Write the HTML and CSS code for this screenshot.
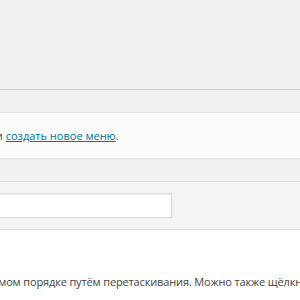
FILE: index.html
```html
<!DOCTYPE html>
<html lang="ru">
<head>
    <meta charset="UTF-8">
    <title>Меню</title>
    <link rel="stylesheet" href="styles.css">
</head>
<body>
    <div class="wrap">
        <div class="tabs"></div>

        <div class="manage-menus">
            <span class="manage-text">Выберите меню для изменения или <a href="#">создать новое меню</a>.</span>
        </div>

        <div class="menu-edit">
            <div class="menu-header">
                <input class="menu-name" type="text" value="">
            </div>
            <div class="menu-body">
                <p class="drag-instructions">Расположите пункты в необходимом порядке путём перетаскивания. Можно также щёлкнуть на стрелку справа от пункта, чтобы открыть дополнительные настройки.</p>
            </div>
        </div>
    </div>
</body>
</html>
```

FILE: styles.css
```css
* {
    box-sizing: border-box;
}

body {
    margin: 0;
    background: #f1f1f1;
    color: #444;
    font-family: 'Open Sans', sans-serif;
    font-size: 11px;
    overflow: hidden;
}

.wrap {
    width: 300px;
    height: 300px;
    overflow: hidden;
}

.tabs {
    height: 90px;
    border-bottom: 1px solid #ccc;
}

.manage-menus {
    margin: 22px -20px 0 -20px;
    height: 47px;
    padding: 0 20px;
    background: #fbfbfb;
    border: 1px solid #e5e5e5;
    box-shadow: 0 1px 1px rgba(0, 0, 0, 0.04);
    display: flex;
    align-items: center;
    white-space: nowrap;
}

.manage-text {
    margin-left: -192px;
}

.manage-menus a {
    color: #0074a2;
}

.menu-edit {
    margin: 22px -20px 0 -20px;
    border-top: 1px solid #dfdfdf;
    background: #fff;
}

.menu-header {
    background: #f5f5f5;
    border-bottom: 1px solid #dfdfdf;
    padding: 11px 0 11px 0;
    height: 48px;
}

.menu-name {
    display: block;
    width: 192px;
    height: 25px;
    margin: 0;
    border: 1px solid #ddd;
    box-shadow: 0 0 0 1px #f0f0f0, inset 0 1px 2px rgba(0, 0, 0, 0.07);
    background: #fff;
    font-family: 'Open Sans', sans-serif;
    font-size: 13px;
}

.menu-body {
    height: 100px;
    padding: 43px 0 0 0;
    white-space: nowrap;
}

.drag-instructions {
    margin: 0 0 0 -154px;
    line-height: 18px;
    letter-spacing: -0.14px;
}
```
